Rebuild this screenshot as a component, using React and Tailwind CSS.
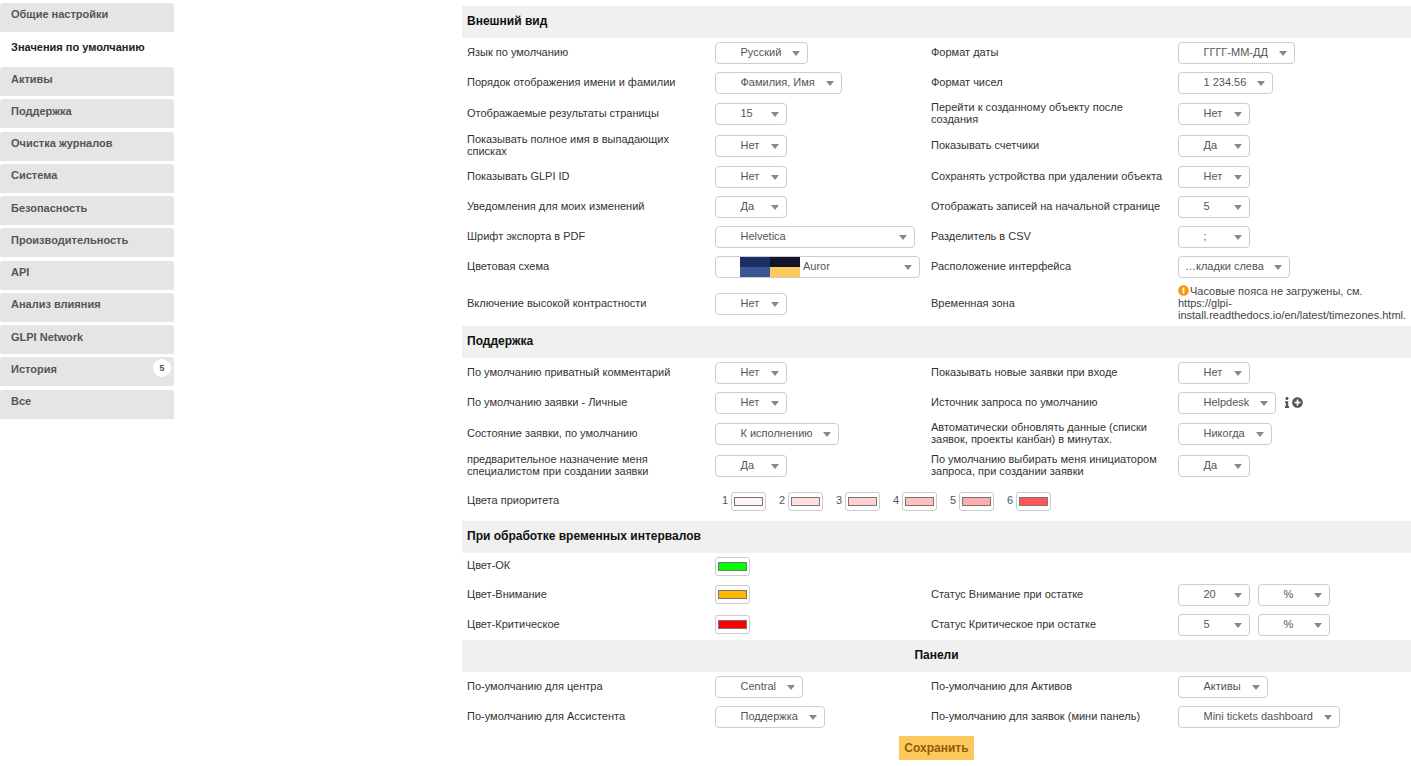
import React from 'react';
import { FaInfo, FaPlusCircle, FaExclamationCircle } from 'react-icons/fa';

const tabs = [
  'Общие настройки', 'Значения по умолчанию', 'Активы', 'Поддержка', 'Очистка журналов', 'Система',
  'Безопасность', 'Производительность', 'API', 'Анализ влияния', 'GLPI Network', 'История', 'Все',
];

const priorities = ['bg-[#fff2f2]', 'bg-[#ffe0e0]', 'bg-[#ffcece]', 'bg-[#ffbfbf]', 'bg-[#ffadad]', 'bg-[#ff5555]'];

const Select = ({ value, w, pl = 'pl-[24.5px]' }) => (
  <div className={`${w} ${pl} h-[22px] pr-[7px] flex items-center justify-between bg-white border border-[#ccc] rounded-[4px] text-[#555] whitespace-nowrap`}>
    <span className="pb-[2px]">{value}</span>
    <span className="w-0 h-0 border-x-4 border-x-transparent border-t-[5px] border-t-[#888]" />
  </div>
);

const Swatch = ({ color, up }) => (
  <div className={`w-[35px] h-[19px] flex items-center justify-center bg-white border border-[#ccc] rounded-[3px] ${up ? 'mb-[2px]' : ''}`}>
    <div className={`w-[29px] h-[9px] border border-[#767676] ${color}`} />
  </div>
);

const Header = ({ children, center }) => (
  <div className={`h-[32px] pb-[2px] bg-[#f0f0f0] flex items-center px-[5px] text-[12px] font-bold text-[#111] ${center ? 'justify-center' : ''}`}>
    {children}
  </div>
);

const Row = ({ h, a, b, c, d }) => (
  <div className={`${h} pl-[5px] grid grid-cols-[248px_216px_247px_1fr] items-center`}>
    <div className="pr-[20px] pb-[2px]">{a}</div>
    <div>{b}</div>
    <div className="pr-[6px] pb-[2px]">{c}</div>
    <div>{d}</div>
  </div>
);

export default function App() {
  return (
    <div className="h-[766px] w-[1411px] overflow-hidden flex bg-white text-[11px] leading-[12px] text-[#333] font-['Liberation_Sans',Arial,sans-serif]">
      <div className="w-[174px] pt-[2.7px] flex flex-col gap-[3.25px] shrink-0">
        {tabs.map((t, i) => (
          <div
            key={t}
            className={`relative h-[29px] pl-[11px] font-bold rounded-t-[3px] ${i === 1 ? 'pt-[6.5px] bg-white text-[#222]' : 'pt-[5.5px] bg-[#e5e5e5] text-[#555]'}`}
          >
            {t}
            {t === 'История' && (
              <span className="absolute right-[3px] top-[2px] w-[18px] h-[18px] rounded-full bg-white flex items-center justify-center text-[9px] text-[#555]">5</span>
            )}
          </div>
        ))}
      </div>

      <div className="ml-[288px] w-[949px] pt-[6px]">
        <Header>Внешний вид</Header>
        <Row h="h-[30px]" a="Язык по умолчанию" b={<Select value="Русский" w="w-[93px]" />} c="Формат даты" d={<Select value="ГГГГ-ММ-ДД" w="w-[117px]" />} />
        <Row h="h-[30px]" a="Порядок отображения имени и фамилии" b={<Select value="Фамилия, Имя" w="w-[127px]" />} c="Формат чисел" d={<Select value="1 234.56" w="w-[95px]" />} />
        <Row h="h-[32px]" a="Отображаемые результаты страницы" b={<Select value="15" w="w-[72px]" />} c="Перейти к созданному объекту после создания" d={<Select value="Нет" w="w-[72px]" />} />
        <Row h="h-[32px]" a="Показывать полное имя в выпадающих списках" b={<Select value="Нет" w="w-[72px]" />} c="Показывать счетчики" d={<Select value="Да" w="w-[72px]" />} />
        <Row h="h-[30px]" a="Показывать GLPI ID" b={<Select value="Нет" w="w-[72px]" />} c="Сохранять устройства при удалении объекта" d={<Select value="Нет" w="w-[72px]" />} />
        <Row h="h-[30px]" a="Уведомления для моих изменений" b={<Select value="Да" w="w-[72px]" />} c="Отображать записей на начальной странице" d={<Select value="5" w="w-[72px]" />} />
        <Row h="h-[30px]" a="Шрифт экспорта в PDF" b={<Select value="Helvetica" w="w-[200px]" />} c="Разделитель в CSV" d={<Select value=";" w="w-[72px]" />} />
        <Row
          h="h-[30px]"
          a="Цветовая схема"
          b={
            <div className="w-[205px] h-[22px] pl-[24px] pr-[7px] flex items-center justify-between border border-[#ccc] rounded-[4px] text-[#555]">
              <div className="flex items-center gap-[3px]">
                <div className="w-[60px] h-[20px] grid grid-cols-2">
                  <div className="bg-[#1b2f62]" />
                  <div className="bg-[#11132a]" />
                  <div className="bg-[#3a5693]" />
                  <div className="bg-[#fec95c]" />
                </div>
                <span className="pb-[2px]">Auror</span>
              </div>
              <span className="w-0 h-0 border-x-4 border-x-transparent border-t-[5px] border-t-[#888]" />
            </div>
          }
          c="Расположение интерфейса"
          d={<Select value="…кладки слева" w="w-[112px]" pl="pl-[6px]" />}
        />
        <Row
          h="h-[44px]"
          a="Включение высокой контрастности"
          b={<Select value="Нет" w="w-[72px]" />}
          c="Временная зона"
          d={
            <div className="text-[#444] pb-[2px]">
              <FaExclamationCircle className="inline w-[11px] h-[11px] mr-px text-[#f79a13] align-[-1px]" />
              Часовые пояса не загружены, см. https://glpi-install.readthedocs.io/en/latest/timezones.html.
            </div>
          }
        />

        <Header>Поддержка</Header>
        <Row h="h-[30px]" a="По умолчанию приватный комментарий" b={<Select value="Нет" w="w-[72px]" />} c="Показывать новые заявки при входе" d={<Select value="Нет" w="w-[72px]" />} />
        <Row
          h="h-[30px]"
          a="По умолчанию заявки - Личные"
          b={<Select value="Нет" w="w-[72px]" />}
          c="Источник запроса по умолчанию"
          d={
            <div className="flex items-center">
              <Select value="Helpdesk" w="w-[98px]" />
              <FaInfo className="ml-[7px] mb-[2px] w-[8px] h-[11px] text-[#555]" />
              <FaPlusCircle className="ml-px mb-[2px] w-[11px] h-[11px] text-[#555]" />
            </div>
          }
        />
        <Row h="h-[32px]" a="Состояние заявки, по умолчанию" b={<Select value="К исполнению" w="w-[124px]" />} c="Автоматически обновлять данные (списки заявок, проекты канбан) в минутах." d={<Select value="Никогда" w="w-[94px]" />} />
        <Row h="h-[32px]" a="предварительное назначение меня специалистом при создании заявки" b={<Select value="Да" w="w-[72px]" />} c="По умолчанию выбирать меня инициатором запроса, при создании заявки" d={<Select value="Да" w="w-[72px]" />} />
        <div className="h-[39px] pl-[5px] flex items-center">
          <div className="w-[248px] pb-[3px]">Цвета приоритета</div>
          <div className="ml-[7px] flex gap-[13px]">
            {priorities.map((color, i) => (
              <div key={color} className="flex items-center gap-[3px] text-[#555]">
                <span className="w-[6px] pb-[3px]">{i + 1}</span>
                <Swatch color={color} />
              </div>
            ))}
          </div>
        </div>

        <Header>При обработке временных интервалов</Header>
        <Row h="h-[27px]" a={<div className="pb-[2px]">Цвет-ОК</div>} b={<Swatch color="bg-[#00ff00]" />} />
        <Row h="h-[30px]" a="Цвет-Внимание" b={<Swatch color="bg-[#ffb800]" up />} c="Статус Внимание при остатке" d={
          <div className="flex gap-[8px]">
            <Select value="20" w="w-[72px]" />
            <Select value="%" w="w-[72px]" />
          </div>
        } />
        <Row h="h-[30px]" a="Цвет-Критическое" b={<Swatch color="bg-[#ff0000]" up />} c="Статус Критическое при остатке" d={
          <div className="flex gap-[8px]">
            <Select value="5" w="w-[72px]" />
            <Select value="%" w="w-[72px]" />
          </div>
        } />

        <Header center>Панели</Header>
        <Row h="h-[30px]" a="По-умолчанию для центра" b={<Select value="Central" w="w-[88px]" />} c="По-умолчанию для Активов" d={<Select value="Активы" w="w-[90px]" />} />
        <Row h="h-[30px]" a="По-умолчанию для Ассистента" b={<Select value="Поддержка" w="w-[110px]" />} c="По-умолчанию для заявок (мини панель)" d={<Select value="Mini tickets dashboard" w="w-[162px]" />} />
        <div className="pt-[4px] flex justify-center">
          <button className="h-[24px] w-[75px] bg-[#fec95c] text-[#8f5a0a] text-[12px] font-bold">Сохранить</button>
        </div>
      </div>
    </div>
  );
}
